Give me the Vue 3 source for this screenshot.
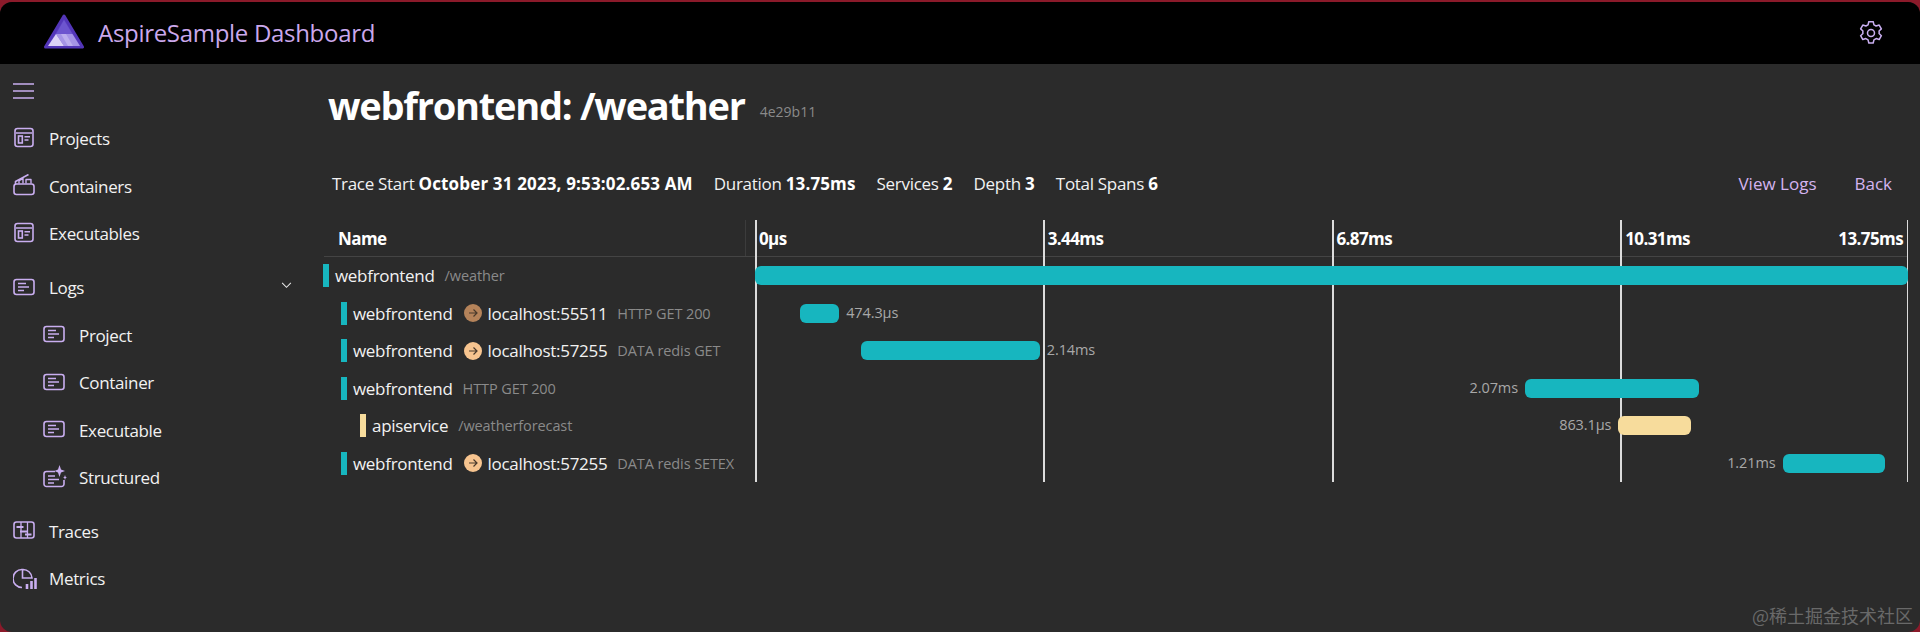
<script setup>
const navTop = [
  { label: 'Projects', icon: 'app' },
  { label: 'Containers', icon: 'box' },
  { label: 'Executables', icon: 'app' },
]
const navLogs = ['Project', 'Container', 'Executable']
const ticks = [
  { label: '0μs', left: 0 },
  { label: '3.44ms', left: 25 },
  { label: '6.87ms', left: 50 },
  { label: '10.31ms', left: 75 },
]
const rows = [
  { name: 'webfrontend', sub: '/weather', depth: 0, color: '#17b6bf', left: 0, width: 100 },
  { name: 'webfrontend', peer: 'localhost:55511', peerColor: '#b5835a', sub: 'HTTP GET 200', depth: 1, color: '#17b6bf', left: 3.9, width: 3.4, dur: '474.3μs', side: 'right' },
  { name: 'webfrontend', peer: 'localhost:57255', peerColor: '#f7c48f', sub: 'DATA redis GET', depth: 1, color: '#17b6bf', left: 9.2, width: 15.5, dur: '2.14ms', side: 'right' },
  { name: 'webfrontend', sub: 'HTTP GET 200', depth: 1, color: '#17b6bf', left: 66.78, width: 15.09, dur: '2.07ms', side: 'left' },
  { name: 'apiservice', sub: '/weatherforecast', depth: 2, color: '#f7dc9c', left: 74.88, width: 6.33, dur: '863.1μs', side: 'left' },
  { name: 'webfrontend', peer: 'localhost:57255', peerColor: '#f7c48f', sub: 'DATA redis SETEX', depth: 1, color: '#17b6bf', left: 89.12, width: 8.85, dur: '1.21ms', side: 'left' },
]
</script>

<template>
  <div class="frame">
    <div class="window">
      <header class="topbar">
        <svg class="logo" viewBox="0 0 40 36" width="40" height="36">
          <path d="M20 2 L38.5 33 H1.5 Z" fill="#5a3fc0" stroke="#5336b8" stroke-width="3" stroke-linejoin="round"/>
          <path d="M20 6 L28.500 20 H12 Z" fill="#6d55cf"/>
          <path d="M12 20 H28.500 L36 32 H20 Z" fill="#a594e6"/>
          <path d="M12 20 L20 32 H4 Z" fill="#dcd2f6"/>
          <path d="M17 20 H22 L29 32 H24 Z" fill="#bcaeee"/>
        </svg>
        <span class="brand">AspireSample Dashboard</span>
        <svg class="gear" viewBox="1 1 22 22" width="24" height="24" fill="none" stroke="#c9aef0" stroke-width="1.400" stroke-linejoin="round">
          <circle cx="12" cy="12" r="3.200"/>
          <path d="M10 1.600h4l.7 2.900 2 1.100 2.800-.9 2 3.500-2.100 2a7 7 0 0 1 0 2.300l2.100 2-2 3.500-2.800-.9-2 1.200-.7 2.900h-4l-.7-2.900-2-1.200-2.800.9-2-3.500 2.100-2a7 7 0 0 1 0-2.300l-2.100-2 2-3.500 2.800.9 2-1.100z"/>
        </svg>
      </header>
      <div class="body">
        <nav class="sidebar">
          <svg class="burger" viewBox="0 0 21 16" width="21" height="16" stroke="#c9aef0" stroke-width="1.300">
            <path d="M0 1h21M0 8h21M0 15h21"/>
          </svg>
          <div class="group">
            <div v-for="n in navTop" :key="n.label" class="item">
              <svg v-if="n.icon === 'app'" class="ic" viewBox="0 0 22 22" width="22" height="22" fill="none" stroke="#c9aef0" stroke-width="1.600">
                <rect x="2" y="1.500" width="18" height="18" rx="2.500"/>
                <path d="M3 6h16"/>
                <rect x="5.500" y="9" width="3.800" height="7"/>
                <path d="M11.500 9.800h5.500M11.500 13h4"/>
              </svg>
              <svg v-else class="ic" viewBox="0 0 22 22" width="22" height="22" fill="none" stroke="#c9aef0" stroke-width="1.600" stroke-linejoin="round">
                <rect x="1" y="10" width="20" height="10.500" rx="2.500"/>
                <path d="M2.500 10 L2.500 7.500 L15.500 0.500"/>
                <path d="M6 9.500 V6.500 L10 4.500 V9.500 M13 9.500 V5.500 H18 V9.500" stroke-width="1.400"/>
              </svg>
              <span>{{ n.label }}</span>
            </div>
          </div>
          <div class="group">
            <div class="item">
              <svg class="ic" viewBox="0 0 22 18" width="22" height="18" fill="none" stroke="#c9aef0" stroke-width="1.600">
                <rect x="1" y="1.500" width="20" height="15" rx="2.500"/>
                <path d="M5 5.500h8M5 9h11M5 12.500h6"/>
              </svg>
              <span>Logs</span>
              <svg class="chev" viewBox="0 0 12 8" width="11" height="7" fill="none" stroke="#e8e8e8" stroke-width="1.200"><path d="M1 1l5 5 5-5"/></svg>
            </div>
            <div v-for="n in navLogs" :key="n" class="item sub">
              <svg class="ic" viewBox="0 0 22 18" width="22" height="18" fill="none" stroke="#c9aef0" stroke-width="1.600">
                <rect x="1" y="1.500" width="20" height="15" rx="2.500"/>
                <path d="M5 5.500h8M5 9h11M5 12.500h6"/>
              </svg>
              <span>{{ n }}</span>
            </div>
            <div class="item sub">
              <svg class="ic" viewBox="0 0 24 24" width="24" height="24" fill="none" stroke="#c9aef0" stroke-width="1.600">
                <path d="M12 6.500H3.500A2.500 2.500 0 0 0 1 9v10a2.500 2.500 0 0 0 2.500 2.500h15A2.500 2.500 0 0 0 21 19v-4"/>
                <path d="M5 11h7M5 14.500h11M5 18h6"/>
                <path d="M16.500 0 L18 4.500 L22 6 L18 7.500 L16.500 12 L15 7.500 L11.500 6 L15 4.500 Z" fill="#c9aef0" stroke="none"/>
                <path d="M22 10 L22.700 12 L24 12.500 L22.700 13 L22 15 L21.300 13 L20 12.500 L21.300 12 Z" fill="#c9aef0" stroke="none"/>
              </svg>
              <span>Structured</span>
            </div>
          </div>
          <div class="group">
            <div class="item">
              <svg class="ic" viewBox="0 0 22 18" width="22" height="18" fill="none" stroke="#c9aef0" stroke-width="1.600">
                <rect x="1" y="1" width="20" height="16" rx="2.500"/>
                <path d="M8 1v16M14.500 1v16" stroke-width="1.300"/>
                <path d="M3.500 6h7M7 10.500h8M12 13.500h6.500" stroke-width="1.800"/>
              </svg>
              <span>Traces</span>
            </div>
            <div class="item">
              <svg class="ic" viewBox="0 0 24 24" width="24" height="24" fill="none" stroke="#c9aef0" stroke-width="1.600">
                <path d="M9 3.500A9 9 0 1 0 9 21.500"/>
                <path d="M9.500 3.500A9 9 0 0 1 19 12H9.500Z"/>
                <path d="M14 23v-5M18.500 23V15M22.500 23V12" stroke-width="2.600"/>
              </svg>
              <span>Metrics</span>
            </div>
          </div>
        </nav>
        <main class="main">
          <div class="title-row">
            <h1>webfrontend: /weather</h1>
            <span class="trace-id">4e29b11</span>
          </div>
          <div class="info">
            <span>Trace Start <b>October 31 2023, 9:53:02.653 AM</b></span>
            <span>Duration <b>13.75ms</b></span>
            <span>Services <b>2</b></span>
            <span>Depth <b>3</b></span>
            <span>Total Spans <b>6</b></span>
            <span class="links"><a>View Logs</a><a>Back</a></span>
          </div>
          <section class="trace">
            <div class="head">
              <div class="name-col">Name</div>
              <div class="axis">
                <span v-for="t in ticks" :key="t.label" class="tick-label" :style="{ left: t.left + '%' }">{{ t.label }}</span>
                <span class="tick-label end">13.75ms</span>
              </div>
            </div>
            <div class="rows">
              <div v-for="(r, i) in rows" :key="i" class="row">
                <div class="name" :class="'d' + r.depth">
                  <i class="mark" :style="{ background: r.color }"></i>
                  <span class="svc">{{ r.name }}</span>
                  <span v-if="r.peer" class="arrow" :style="{ background: r.peerColor }">
                    <svg viewBox="0 0 12 12" width="12" height="12" fill="none" stroke="#4a3a2c" stroke-width="1.200"><path d="M2 6h8M6.500 2.500L10 6l-3.500 3.500"/></svg>
                  </span>
                  <span v-if="r.peer" class="svc">{{ r.peer }}</span>
                  <span class="desc">{{ r.sub }}</span>
                </div>
                <div class="lane">
                  <div class="bar" :style="{ left: r.left + '%', width: r.width + '%', background: r.color }">
                    <span v-if="r.dur" class="dur" :class="r.side">{{ r.dur }}</span>
                  </div>
                </div>
              </div>
            </div>
            <div class="grid-lines">
              <i v-for="t in ticks" :key="t.label" :style="{ left: t.left + '%' }"></i>
              <i class="last"></i>
            </div>
          </section>
        </main>
      </div>
      <span class="mark-wm">@稀土掘金技术社区</span>
    </div>
  </div>
</template>

<style>
html, body { margin: 0; background: #8b1a2a; }
</style>

<style scoped>
.frame {
  width: 1920px;
  height: 632px;
  background: #8b1a2a;
  overflow: hidden;
  font-family: "Open Sans", "Noto Sans", sans-serif;
  color: #f2f2f2;
}
.window {
  position: relative;
  margin-top: 2px;
  height: 630px;
  background: #2b2b2b;
  border-radius: 12px;
  overflow: hidden;
}
.topbar {
  height: 62px;
  background: #000;
  display: flex;
  align-items: center;
  padding: 0 37px 2px 44px;
  box-sizing: border-box;
}
.logo { flex: none; margin-right: 14px; }
.brand { font-size: 24px; color: #cba8ec; letter-spacing: -0.3px; }
.gear { margin-left: auto; margin-top: 2px; }
.body { display: flex; }
.sidebar {
  width: 312px;
  flex: none;
  padding: 19px 0 0 13px;
  box-sizing: border-box;
  display: flex;
  flex-direction: column;
}
.burger { display: block; margin-bottom: 16px; }
.group { margin-bottom: 6.300px; }
.item {
  height: 47.500px;
  display: flex;
  align-items: center;
  font-size: 17px;
  letter-spacing: -0.35px;
  position: relative;
}
.item .ic { position: absolute; left: 0; top: 50%; transform: translateY(-50%); margin-top: -1px; }
.item span { margin-left: 36px; }
.item.sub .ic { left: 30px; }
.item.sub span { margin-left: 66px; }
.chev { position: absolute; left: 268px; top: 18px; }
.main { flex: 1; min-width: 0; padding: 0 12px 0 0; }
.title-row { height: 86px; display: flex; align-items: center; padding: 0 0 5px 16px; box-sizing: border-box; }
h1 { margin: 0; font-size: 38px; font-weight: 700; color: #fff; letter-spacing: -1.25px; }
.trace-id { margin-left: 15px; margin-top: 13px; font-size: 14px; color: #8a8a8a; }
.info {
  display: flex;
  align-items: center;
  gap: 21px;
  height: 36px;
  margin-top: 15px;
  padding-left: 20px;
  font-size: 17px;
  letter-spacing: -0.3px;
}
.info b { font-weight: 700; color: #fff; letter-spacing: 0.15px; }
.links { margin-left: auto; display: flex; gap: 38px; padding-right: 16px; color: #d4b4f0; letter-spacing: 0; }
.trace { position: relative; margin-top: 19px; }
.head {
  display: flex;
  height: 36px;
  align-items: center;
  border-bottom: 1px solid #444;
  margin-left: 12px;
  font-weight: 700;
  font-size: 17px;
  letter-spacing: -0.6px;
  color: #fff;
}
.name-col { width: 422px; height: 100%; display: flex; align-items: center; padding-left: 14px; box-sizing: border-box; border-right: 1px solid #3c3c3c; margin-right: 7px; }
.axis { position: relative; flex: 1; height: 100%; }
.tick-label { position: absolute; top: 7px; margin-left: 6px; }
.tick-label.end { right: 5px; }
.rows { display: flex; flex-direction: column; }
.row { display: flex; height: 37.500px; align-items: center; margin-left: 11px; }
.name {
  width: 432px;
  flex: none;
  display: flex;
  align-items: center;
  font-size: 17px;
  letter-spacing: -0.3px;
  box-sizing: border-box;
}
.d1 { padding-left: 18px; }
.d2 { padding-left: 37px; }
.mark { width: 6px; height: 23px; flex: none; margin-right: 6px; }
.svc { color: #f2f2f2; }
.desc { font-size: 14.500px; color: #8a8a8a; margin-left: 10px; letter-spacing: -0.1px; }
.arrow {
  width: 18px; height: 18px; border-radius: 50%;
  display: inline-flex; align-items: center; justify-content: center;
  margin: 0 6px 0 11px;
}
.lane { position: relative; flex: 1; height: 19px; }
.bar { position: absolute; top: 0; bottom: 0; border-radius: 6px; z-index: 2; }
.dur { position: absolute; top: -1px; font-size: 14.500px; color: #a8a8a8; white-space: nowrap; letter-spacing: -0.1px; }
.dur.right { left: 100%; margin-left: 7px; }
.dur.left { right: 100%; margin-right: 7px; }
.grid-lines { position: absolute; left: 443px; right: 0; top: 0; bottom: 0; pointer-events: none; }
.grid-lines i { position: absolute; top: 0; bottom: 0; width: 2px; background: #dcdcdc; }
.grid-lines i.last { right: 0; width: 1px; }
.mark-wm {
  position: absolute;
  left: 1752px;
  top: 600px;
  font-family: "Noto Sans CJK SC", sans-serif;
  font-size: 18px;
  color: #696969;
}
</style>
